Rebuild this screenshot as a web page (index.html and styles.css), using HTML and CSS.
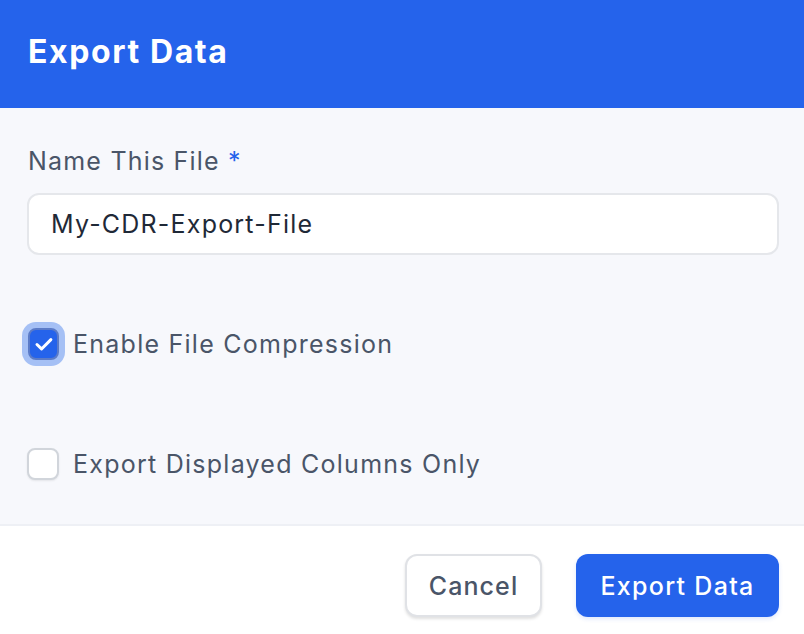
FILE: index.html
```html
<!DOCTYPE html>
<html lang="en">
<head>
<meta charset="utf-8">
<title>Export Data</title>
<link rel="stylesheet" href="styles.css">
</head>
<body>
<div class="dialog">
  <header class="dialog-header">
    <h1 class="dialog-title">Export Data</h1>
  </header>
  <main class="dialog-body">
    <label class="field-label" for="fname">Name This File <span class="req">*</span></label>
    <input class="text-input" id="fname" type="text" value="My-CDR-Export-File">
    <label class="check-row check-row-first">
      <span class="checkbox checked">
        <svg viewBox="0 0 20 20" width="26" height="26"><path d="M4.6 10.4l3.5 3.4 7.2-7.2" fill="none" stroke="#fff" stroke-width="2.3" stroke-linecap="round" stroke-linejoin="round"/></svg>
      </span>
      <span class="check-label">Enable File Compression</span>
    </label>
    <label class="check-row check-row-second">
      <span class="checkbox"></span>
      <span class="check-label">Export Displayed Columns Only</span>
    </label>
  </main>
  <footer class="dialog-footer">
    <button class="btn btn-secondary" type="button">Cancel</button>
    <button class="btn btn-primary" type="button">Export Data</button>
  </footer>
</div>
</body>
</html>
```

FILE: styles.css
```css
* { box-sizing: border-box; }
html, body { margin: 0; padding: 0; }
body {
  font-family: Inter, "Noto Sans", "Liberation Sans", sans-serif;
  background: #ffffff;
  width: 804px;
  height: 634px;
  overflow: hidden;
}
.dialog {
  display: flex;
  flex-direction: column;
  width: 804px;
}
.dialog-header {
  background: #2563eb;
  height: 108px;
  display: flex;
  align-items: center;
  padding: 0 28px 4px;
}
.dialog-title {
  margin: 0;
  color: #ffffff;
  font-size: 32px;
  font-weight: 700;
  line-height: 40px;
  letter-spacing: 1.6px;
}
.dialog-body {
  background: #f7f8fc;
  display: flex;
  flex-direction: column;
  padding: 35px 25px 44px 27px;
}
.field-label {
  font-size: 25px;
  line-height: 36px;
  color: #4a5568;
  font-weight: 400;
  padding-left: 1px;
  letter-spacing: 1.2px;
}
.req { color: #2563eb; }
.text-input {
  margin-top: 14px;
  height: 62px;
  width: 100%;
  border: 2px solid #e5e7eb;
  border-radius: 12px;
  background: #ffffff;
  padding: 0 22px;
  font-family: inherit;
  font-size: 25px;
  font-weight: 400;
  color: #1f2937;
  letter-spacing: 1.2px;
  outline: none;
}
.check-row {
  display: flex;
  align-items: center;
  gap: 14px;
  height: 32px;
}
.check-row-first { margin-top: 73px; padding-left: 1px; }
.check-row-second { margin-top: 88px; }
.checkbox {
  width: 32px;
  height: 32px;
  flex: none;
  border-radius: 8px;
  border: 2px solid #d1d5db;
  background: #ffffff;
  box-shadow: 0 1px 2px rgba(0,0,0,0.08);
  display: flex;
  align-items: center;
  justify-content: center;
}
.checkbox.checked {
  width: 31px;
  height: 32px;
  background: #2563eb;
  border: 2px solid #5b7bc8;
  box-shadow: 0 0 0 6px #a5c0f5;
}
.check-label {
  font-size: 25px;
  color: #4a5568;
  font-weight: 400;
  letter-spacing: 1.25px;
  line-height: 32px;
}
.dialog-footer {
  border-top: 2px solid #eef0f5;
  background: #ffffff;
  display: flex;
  justify-content: flex-end;
  gap: 34px;
  padding: 28px 25px 0 0;
  height: 110px;
}
.btn {
  height: 63px;
  border-radius: 12px;
  font-family: inherit;
  font-size: 25px;
  font-weight: 500;
  letter-spacing: 1.1px;
  cursor: pointer;
}
.btn-secondary {
  width: 137px;
  background: #ffffff;
  color: #4a5568;
  border: 2px solid #e0e2e6;
  box-shadow: 0 2px 3px rgba(0,0,0,0.12);
}
.btn-primary {
  width: 203px;
  background: #2563eb;
  color: #ffffff;
  border: none;
  letter-spacing: 1.3px;
  box-shadow: 0 2px 4px rgba(37,99,235,0.15);
}
```
